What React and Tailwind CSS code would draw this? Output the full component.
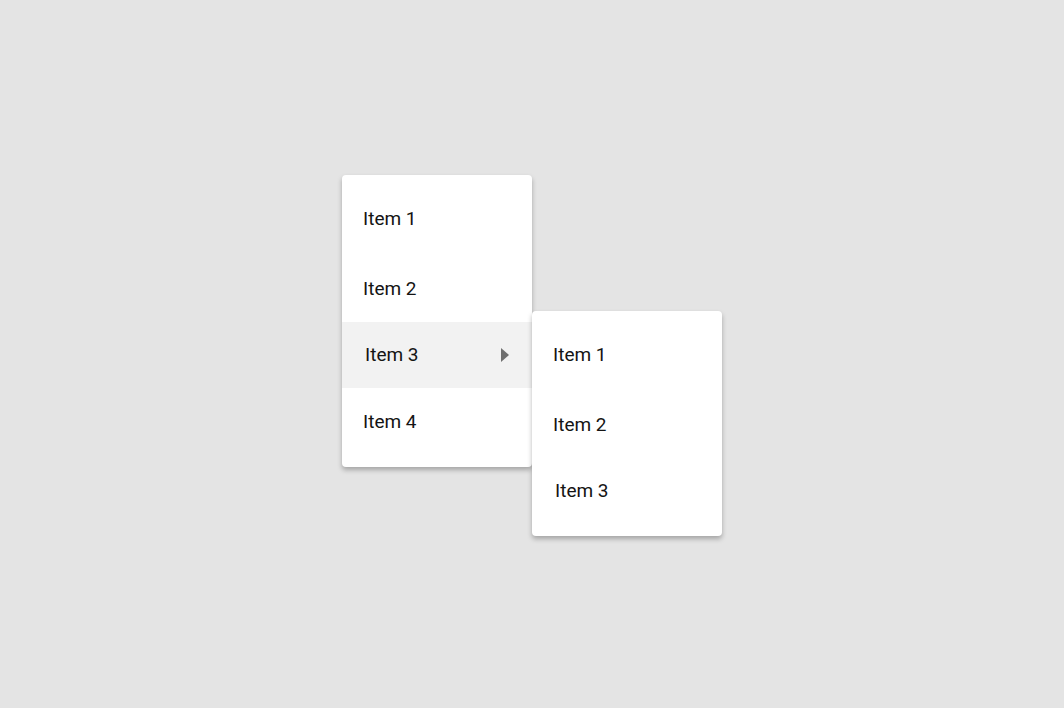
import React from 'react';

const rowTops = ['mt-[10px]', 'mt-[4px]', 'mt-[1px]', 'mt-0'];

const MenuRow = ({ label, index, active, arrow, shift }) => (
    <div
        className={`${rowTops[index]} h-[66px] flex items-center justify-between pr-[23px] ${shift ? 'pl-[23px] pb-[2px]' : 'pl-[21px]'} ${active ? 'bg-[#f2f2f2]' : ''}`}
    >
        <span className="text-[19px] text-[#141414] leading-none">{label}</span>
        {arrow && (
            <svg width="8" height="14" viewBox="0 0 8 14" className="mt-[2px]">
                <path d="M0 0 L8 7 L0 14 Z" fill="#6f6f6f" />
            </svg>
        )}
    </div>
);

const App = () => {
    return (
        <div className="min-h-screen w-full bg-[#e4e4e4] flex items-center justify-center pt-[3px] font-['Roboto',sans-serif]">
            <div className="flex items-start">
                {/* main menu */}
                <div className="w-[190px] h-[292px] bg-white rounded-[4px] overflow-hidden shadow-[0_3px_5px_rgba(0,0,0,0.28)] relative">
                    <MenuRow label="Item 1" index={0} />
                    <MenuRow label="Item 2" index={1} />
                    <MenuRow label="Item 3" index={2} active arrow shift />
                    <MenuRow label="Item 4" index={3} />
                </div>

                {/* submenu */}
                <div className="w-[190px] h-[225px] mt-[136px] bg-white rounded-[4px] overflow-hidden shadow-[0_3px_5px_rgba(0,0,0,0.28)] relative z-10">
                    <MenuRow label="Item 1" index={0} />
                    <MenuRow label="Item 2" index={1} />
                    <MenuRow label="Item 3" index={2} shift />
                </div>
            </div>
        </div>
    );
};

export default App;
